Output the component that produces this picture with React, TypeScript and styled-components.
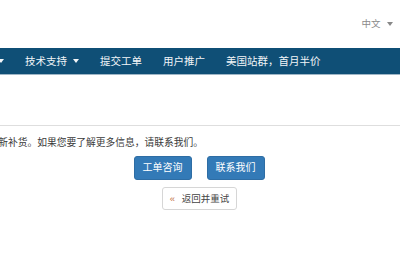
import React from 'react';
import styled, { createGlobalStyle } from 'styled-components';

const Global = createGlobalStyle`
  html, body { margin: 0; padding: 0; background: #fff; }
  body {
    width: 400px;
    height: 260px;
    overflow: hidden;
    font-family: "Liberation Sans", "Noto Sans CJK SC", sans-serif;
    color: #333;
  }
  #root { width: 400px; }
`;

const Header = styled.header`
  height: 48px;
  display: flex;
  justify-content: flex-end;
  align-items: center;
  padding-right: 7px;
`;

const Lang = styled.span`
  display: flex;
  align-items: center;
  gap: 6.5px;
  font-size: 9.5px;
  line-height: 14px;
  color: #8a8a8a;
`;

const Caret = styled.span<{ $color?: string }>`
  display: inline-block;
  width: 0;
  height: 0;
  border-top: 4px solid ${p => p.$color || 'currentColor'};
  border-left: 3px solid transparent;
  border-right: 3px solid transparent;
`;

const NavBar = styled.nav`
  height: 26px;
  background: #0f4f76;
  border-bottom: 1px solid #9fb6c6;
  display: flex;
  overflow: hidden;
`;

const NavInner = styled.ul`
  list-style: none;
  margin: 0;
  padding: 0;
  width: 331px;
  display: flex;
  justify-content: flex-end;
  flex-shrink: 0;
`;

const NavItem = styled.li`
  flex-shrink: 0;
  display: flex;
  align-items: center;
  gap: 6px;
  padding: 0 10.5px;
  font-size: 10.5px;
  line-height: 26px;
  color: #f2f5f8;
  white-space: nowrap;
`;

const Main = styled.main`
  margin-top: 50px;
  border-top: 1px solid #dedede;
  padding-top: 9.5px;
`;

const MessageRow = styled.div`
  width: 203px;
  display: flex;
  justify-content: flex-end;
`;

const Message = styled.p`
  margin: 0;
  flex-shrink: 0;
  white-space: nowrap;
  font-size: 9.75px;
  line-height: 14px;
  color: #3a3a3a;
`;

const ButtonRow = styled.div`
  display: flex;
  justify-content: center;
  gap: 15px;
  margin-top: 6.5px;
  padding-right: 2px;
`;

const PrimaryButton = styled.button`
  height: 24px;
  padding: 0 8px;
  border: 1px solid #2e6da4;
  border-radius: 3px;
  background: #337ab7;
  color: #fff;
  font-family: inherit;
  font-size: 10px;
  line-height: 22px;
`;

const BackRow = styled.div`
  display: flex;
  justify-content: center;
  margin-top: 7px;
  padding-right: 1px;
`;

const BackButton = styled.button`
  height: 23px;
  padding: 0 7px;
  border: 1px solid #d6d6d6;
  border-radius: 3px;
  background: #fff;
  color: #444;
  font-family: inherit;
  font-size: 9.5px;
  line-height: 21px;
  display: flex;
  align-items: center;
`;

const Laquo = styled.span`
  color: #c0703f;
  margin-right: 6.5px;
`;

export default function App() {
  return (
    <>
      <Global />
      <Header>
        <Lang>
          中文 <Caret $color="#888" />
        </Lang>
      </Header>
      <NavBar>
        <NavInner>
          <NavItem>首页</NavItem>
          <NavItem>
            产品服务 <Caret />
          </NavItem>
          <NavItem>
            技术支持 <Caret />
          </NavItem>
          <NavItem>提交工单</NavItem>
          <NavItem>用户推广</NavItem>
          <NavItem>美国站群，首月半价</NavItem>
        </NavInner>
      </NavBar>
      <Main>
        <MessageRow>
          <Message>很抱歉，该产品暂时缺货，我们会尽快重新补货。如果您要了解更多信息，请联系我们。</Message>
        </MessageRow>
        <ButtonRow>
          <PrimaryButton>工单咨询</PrimaryButton>
          <PrimaryButton>联系我们</PrimaryButton>
        </ButtonRow>
        <BackRow>
          <BackButton>
            <Laquo>«</Laquo>返回并重试
          </BackButton>
        </BackRow>
      </Main>
    </>
  );
}
